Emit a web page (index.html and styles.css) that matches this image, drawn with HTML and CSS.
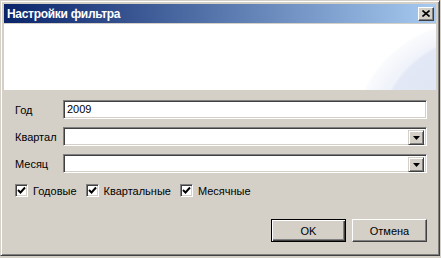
FILE: index.html
```html
<!DOCTYPE html>
<html lang="ru">
<head>
    <meta charset="UTF-8">
    <title>Настройки фильтра</title>
    <link rel="stylesheet" href="styles.css">
</head>
<body>

<div class="window">
    <div class="titlebar">
        <span class="title">Настройки фильтра</span>
        <div class="close-btn">
            <svg width="8" height="7" viewBox="0 0 8 7"><path d="M0.5 0.5 L7.5 6.5 M7.5 0.5 L0.5 6.5" stroke="#000" stroke-width="1.6"/></svg>
        </div>
    </div>
    <div class="banner"></div>
    <div class="content">
        <div class="fields">
            <span class="label">Год</span>
            <div class="edit">2009</div>
            <span class="label">Квартал</span>
            <div class="edit combo">
                <span class="combo-text"></span>
                <div class="combo-btn"><svg width="7" height="4" viewBox="0 0 7 4"><path d="M0 0 H7 L3.5 4 Z" fill="#000"/></svg></div>
            </div>
            <span class="label">Месяц</span>
            <div class="edit combo">
                <span class="combo-text"></span>
                <div class="combo-btn"><svg width="7" height="4" viewBox="0 0 7 4"><path d="M0 0 H7 L3.5 4 Z" fill="#000"/></svg></div>
            </div>
        </div>

        <div class="checks">
            <label class="check"><span class="box"><svg width="9" height="9" viewBox="0 0 9 9"><path d="M1 4 L3.5 6.5 L8 1.5" fill="none" stroke="#000" stroke-width="1.9"/></svg></span>Годовые</label>
            <label class="check"><span class="box"><svg width="9" height="9" viewBox="0 0 9 9"><path d="M1 4 L3.5 6.5 L8 1.5" fill="none" stroke="#000" stroke-width="1.9"/></svg></span>Квартальные</label>
            <label class="check"><span class="box"><svg width="9" height="9" viewBox="0 0 9 9"><path d="M1 4 L3.5 6.5 L8 1.5" fill="none" stroke="#000" stroke-width="1.9"/></svg></span>Месячные</label>
        </div>

        <div class="buttons">
            <div class="btn default">OK</div>
            <div class="btn">Отмена</div>
        </div>
    </div>
</div>

</body>
</html>
```

FILE: styles.css
```css
body {
    margin: 0;
    background: #d4d0c8;
    font-family: "Liberation Sans", Arial, sans-serif;
    font-size: 11px;
    color: #000;
}
.window {
    width: 440px;
    height: 256px;
    box-sizing: border-box;
    background: #d4d0c8;
    border-top: 1px solid #d4d0c8;
    border-left: 1px solid #d4d0c8;
    border-right: 1px solid #404040;
    border-bottom: 1px solid #404040;
    box-shadow: inset 1px 1px #fff, inset -1px -1px #808080;
    padding: 3px;
    display: flex;
    flex-direction: column;
}
.titlebar {
    height: 19px;
    display: flex;
    align-items: center;
    justify-content: space-between;
    padding: 0 2px 0 3px;
    background: linear-gradient(to right, #0a246a, #a6caf0);
}
.title {
    color: #fff;
    font-weight: bold;
    font-size: 12px;
    letter-spacing: -0.3px;
}
.close-btn {
    width: 16px;
    height: 14px;
    box-sizing: border-box;
    background: #d4d0c8;
    border-top: 1px solid #fff;
    border-left: 1px solid #fff;
    border-right: 1px solid #404040;
    border-bottom: 1px solid #404040;
    box-shadow: inset -1px -1px #808080;
    display: flex;
    align-items: center;
    justify-content: center;
}
.banner {
    height: 66px;
    margin-top: 1px;
    background:
        radial-gradient(ellipse 105px 99px at 480px 110px, #dae2f3 0, #e2e8f5 97%, rgba(255,255,255,0) 100%),
        radial-gradient(ellipse 130px 115px at 480px 110px, #e9eef8 0, #f0f3fa 85%, #fafbfd 99%, rgba(255,255,255,0) 100%),
        #fff;
}
.content {
    flex: 1;
    padding: 10px 9px 0 11px;
    display: flex;
    flex-direction: column;
}
.fields {
    display: grid;
    grid-template-columns: 48px 1fr;
    row-gap: 8px;
    align-items: center;
}
.edit {
    height: 19px;
    box-sizing: border-box;
    background: #fff;
    border-top: 1px solid #808080;
    border-left: 1px solid #808080;
    border-right: 1px solid #fff;
    border-bottom: 1px solid #fff;
    box-shadow: inset 1px 1px #404040, inset -1px -1px #d4d0c8;
    padding: 0 3px;
    line-height: 17px;
}
.combo {
    display: flex;
    padding: 2px;
}
.combo-text {
    flex: 1;
}
.combo-btn {
    width: 16px;
    height: 15px;
    box-sizing: border-box;
    background: #d4d0c8;
    border-top: 1px solid #d4d0c8;
    border-left: 1px solid #d4d0c8;
    border-right: 1px solid #404040;
    border-bottom: 1px solid #404040;
    box-shadow: inset 1px 1px #fff, inset -1px -1px #808080;
    display: flex;
    align-items: center;
    justify-content: center;
}
.checks {
    display: flex;
    gap: 9px;
    margin-top: 11px;
}
.check {
    display: flex;
    align-items: center;
    height: 13px;
}
.box {
    width: 13px;
    height: 13px;
    box-sizing: border-box;
    margin-right: 5px;
    background: #fff;
    border-top: 1px solid #808080;
    border-left: 1px solid #808080;
    border-right: 1px solid #fff;
    border-bottom: 1px solid #fff;
    box-shadow: inset 1px 1px #404040, inset -1px -1px #d4d0c8;
    display: flex;
    align-items: center;
    justify-content: center;
}
.buttons {
    display: flex;
    justify-content: flex-end;
    gap: 6px;
    margin-top: 22px;
}
.btn {
    width: 75px;
    height: 23px;
    box-sizing: border-box;
    display: flex;
    align-items: center;
    justify-content: center;
    border-top: 1px solid #fff;
    border-left: 1px solid #fff;
    border-right: 1px solid #404040;
    border-bottom: 1px solid #404040;
    box-shadow: inset -1px -1px #808080;
}
.btn.default {
    border: 1px solid #000;
    box-shadow: inset 1px 1px #fff, inset -1px -1px #404040, inset -2px -2px #808080;
}
```
